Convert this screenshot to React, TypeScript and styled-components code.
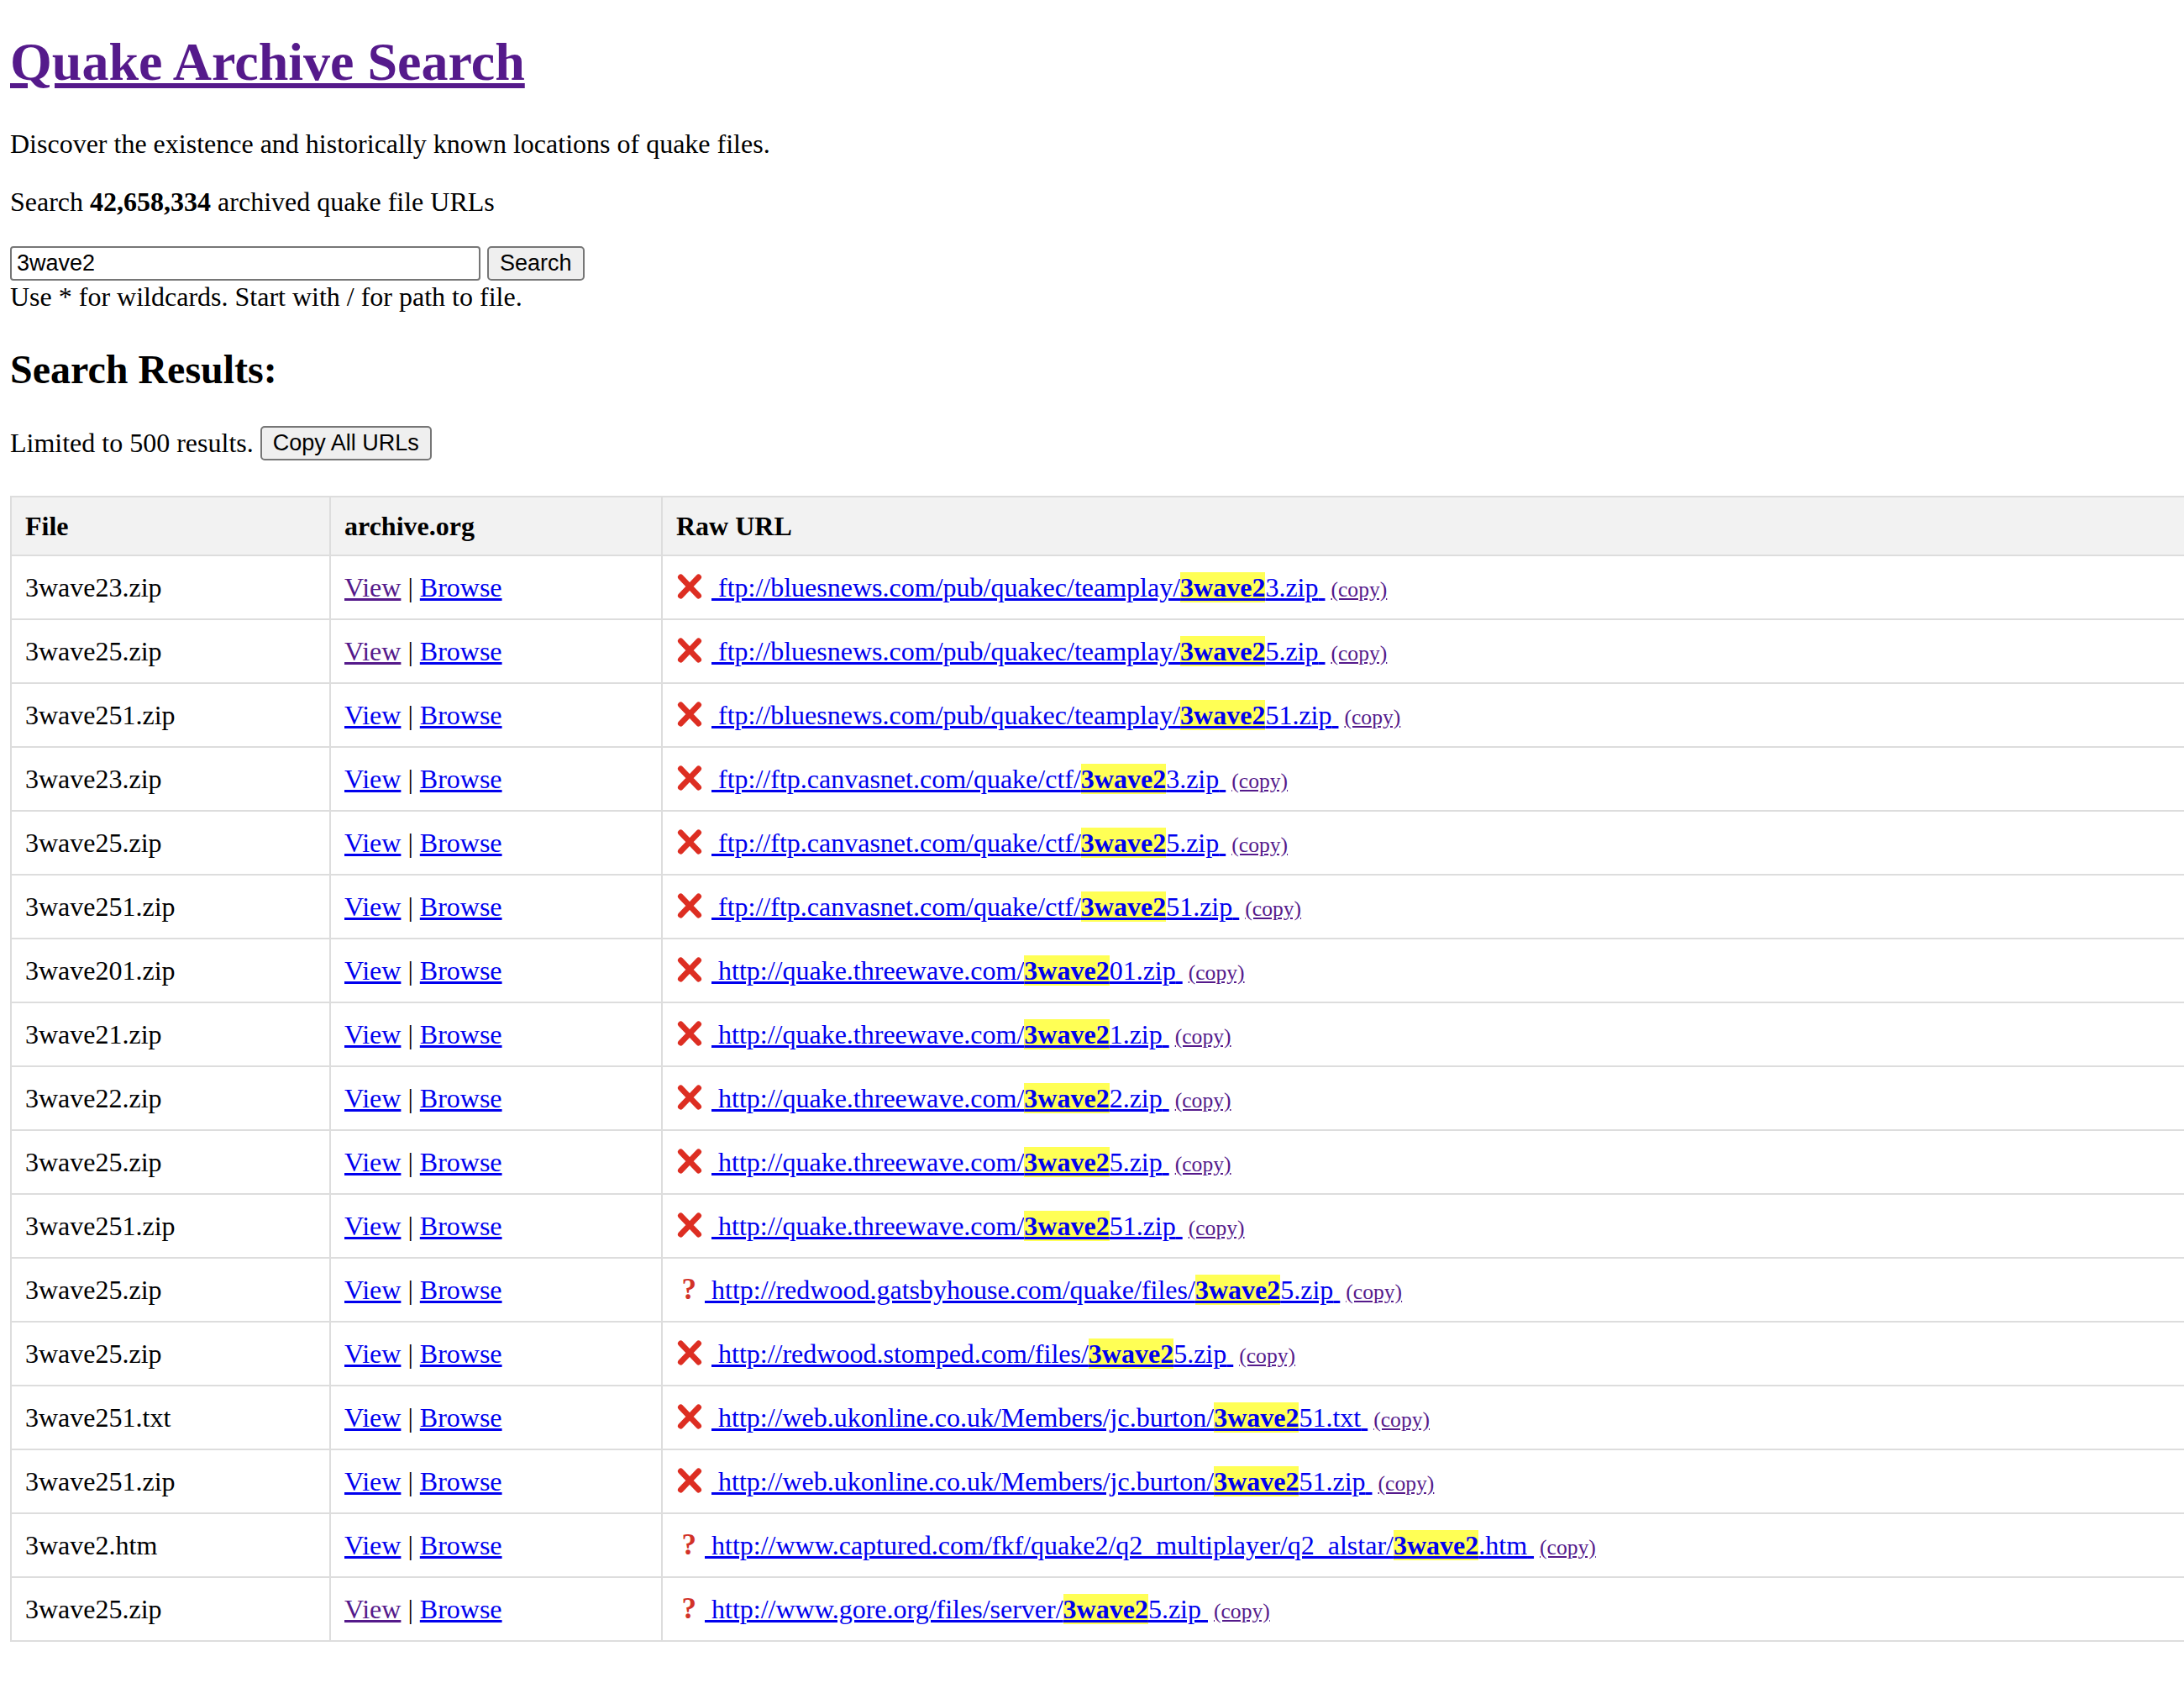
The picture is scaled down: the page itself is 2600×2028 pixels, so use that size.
import React from "react";
import styled, { createGlobalStyle } from "styled-components";

type Row = {
  file: string;
  viewed?: boolean;
  status: "gone" | "unknown";
  base: string;
  rest: string;
};

const QUERY = "3wave2";

const rows: Row[] = [
  { file: "3wave23.zip", viewed: true, status: "gone", base: "ftp://bluesnews.com/pub/quakec/teamplay/", rest: "3.zip" },
  { file: "3wave25.zip", viewed: true, status: "gone", base: "ftp://bluesnews.com/pub/quakec/teamplay/", rest: "5.zip" },
  { file: "3wave251.zip", status: "gone", base: "ftp://bluesnews.com/pub/quakec/teamplay/", rest: "51.zip" },
  { file: "3wave23.zip", status: "gone", base: "ftp://ftp.canvasnet.com/quake/ctf/", rest: "3.zip" },
  { file: "3wave25.zip", status: "gone", base: "ftp://ftp.canvasnet.com/quake/ctf/", rest: "5.zip" },
  { file: "3wave251.zip", status: "gone", base: "ftp://ftp.canvasnet.com/quake/ctf/", rest: "51.zip" },
  { file: "3wave201.zip", status: "gone", base: "http://quake.threewave.com/", rest: "01.zip" },
  { file: "3wave21.zip", status: "gone", base: "http://quake.threewave.com/", rest: "1.zip" },
  { file: "3wave22.zip", status: "gone", base: "http://quake.threewave.com/", rest: "2.zip" },
  { file: "3wave25.zip", status: "gone", base: "http://quake.threewave.com/", rest: "5.zip" },
  { file: "3wave251.zip", status: "gone", base: "http://quake.threewave.com/", rest: "51.zip" },
  { file: "3wave25.zip", status: "unknown", base: "http://redwood.gatsbyhouse.com/quake/files/", rest: "5.zip" },
  { file: "3wave25.zip", status: "gone", base: "http://redwood.stomped.com/files/", rest: "5.zip" },
  { file: "3wave251.txt", status: "gone", base: "http://web.ukonline.co.uk/Members/jc.burton/", rest: "51.txt" },
  { file: "3wave251.zip", status: "gone", base: "http://web.ukonline.co.uk/Members/jc.burton/", rest: "51.zip" },
  { file: "3wave2.htm", status: "unknown", base: "http://www.captured.com/fkf/quake2/q2_multiplayer/q2_alstar/", rest: ".htm" },
  { file: "3wave25.zip", viewed: true, status: "unknown", base: "http://www.gore.org/files/server/", rest: "5.zip" },
];

const Cross = () => (
  <CrossIcon viewBox="0 0 32 32" aria-label="missing">
    <path d="M5 4 L27 27 M27 4 L5 27" />
  </CrossIcon>
);

const App = () => (
  <Page>
    <GlobalStyle />
    <Title>
      <a href="#">Quake Archive Search</a>
    </Title>
    <Text>Discover the existence and historically known locations of quake files.</Text>
    <Text>
      Search <b>42,658,334</b> archived quake file URLs
    </Text>
    <SearchRow>
      <SearchInput defaultValue="3wave2" />
      <Button>Search</Button>
    </SearchRow>
    <Hint>Use * for wildcards. Start with / for path to file.</Hint>
    <Heading>Search Results:</Heading>
    <LimitRow>
      <span>Limited to 500 results.</span>
      <Button>Copy All URLs</Button>
    </LimitRow>
    <Table>
      <thead>
        <tr>
          <HeadCell $w={380}>File</HeadCell>
          <HeadCell $w={395}>archive.org</HeadCell>
          <HeadCell>Raw URL</HeadCell>
        </tr>
      </thead>
      <tbody>
        {rows.map((r, i) => (
          <tr key={i}>
            <Cell>{r.file}</Cell>
            <Cell>
              <Link href="#" $visited={r.viewed}>View</Link> | <Link href="#">Browse</Link>
            </Cell>
            <Cell>
              {r.status === "gone" ? <Cross /> : <Unknown>?</Unknown>}
              <Link href="#">
                {" "}
                {r.base}
                <Match>{QUERY}</Match>
                {r.rest}{" "}
              </Link>{" "}
              <CopyLink href="#">(copy)</CopyLink>
            </Cell>
          </tr>
        ))}
      </tbody>
    </Table>
  </Page>
);

export default App;

const GlobalStyle = createGlobalStyle`
  html {
    overflow: hidden;
  }
  body {
    margin: 0;
    background: #fff;
    color: #000;
    font-family: "Liberation Serif", "Times New Roman", serif;
    font-size: 32px;
    line-height: 37px;
  }
`;

const Page = styled.div`
  padding: 1px 0 60px 12px;
`;

const Title = styled.h1`
  margin: 36px 0 42px;
  font-size: 64px;
  line-height: 74px;
  font-weight: bold;
  a {
    color: #551a8b;
  }
`;

const Text = styled.p`
  margin: 32px 0;
`;

const SearchRow = styled.div`
  display: flex;
  gap: 8px;
  height: 41px;
  margin-top: 34px;
`;

const SearchInput = styled.input`
  box-sizing: border-box;
  width: 560px;
  height: 41px;
  padding: 2px 6px;
  border: 2px solid #767676;
  border-radius: 4px;
  font-family: "Liberation Sans", Arial, sans-serif;
  font-size: 27px;
  color: #000;
  outline: none;
`;

const Button = styled.button`
  box-sizing: border-box;
  height: 41px;
  padding: 0 13px;
  background: #efefef;
  border: 2px solid #767676;
  border-radius: 5px;
  font-family: "Liberation Sans", Arial, sans-serif;
  font-size: 27px;
  color: #000;
`;

const Hint = styled.div`
  margin-top: 1px;
`;

const Heading = styled.h2`
  margin: 40px 0 40px;
  font-size: 48px;
  line-height: 55px;
  font-weight: bold;
`;

const LimitRow = styled.div`
  display: flex;
  align-items: center;
  gap: 8px;
  height: 41px;
`;

const Table = styled.table`
  margin-top: 42px;
  width: 2640px;
  table-layout: fixed;
  border-collapse: collapse;
  border: 2px solid #ddd;
`;

const HeadCell = styled.th<{ $w?: number }>`
  box-sizing: border-box;
  ${(p) => (p.$w ? `width: ${p.$w}px;` : "")}
  padding: 14px 16px;
  line-height: 40px;
  text-align: left;
  font-weight: bold;
  background: #f2f2f2;
  border: 2px solid #ddd;
`;

const Cell = styled.td`
  padding: 17px 16px;
  line-height: 40px;
  white-space: nowrap;
  border: 2px solid #ddd;
`;

const Link = styled.a<{ $visited?: boolean }>`
  color: ${(p) => (p.$visited ? "#551a8b" : "#0000ee")};
  text-decoration: underline;
`;

const Match = styled.b`
  background: #ffff55;
`;

const CopyLink = styled.a`
  margin-left: 7px;
  font-size: 25.6px;
  line-height: 1;
  color: #551a8b;
  text-decoration: underline;
`;

const CrossIcon = styled.svg`
  width: 32px;
  height: 31px;
  margin-right: 10px;
  vertical-align: -4px;
  fill: none;
  stroke: #dd2e22;
  stroke-width: 7;
  stroke-linecap: round;
`;

const Unknown = styled.span`
  display: inline-block;
  width: 24px;
  margin-right: 10px;
  text-align: right;
  font-size: 35px;
  line-height: 1;
  font-weight: bold;
  color: #d23228;
`;
